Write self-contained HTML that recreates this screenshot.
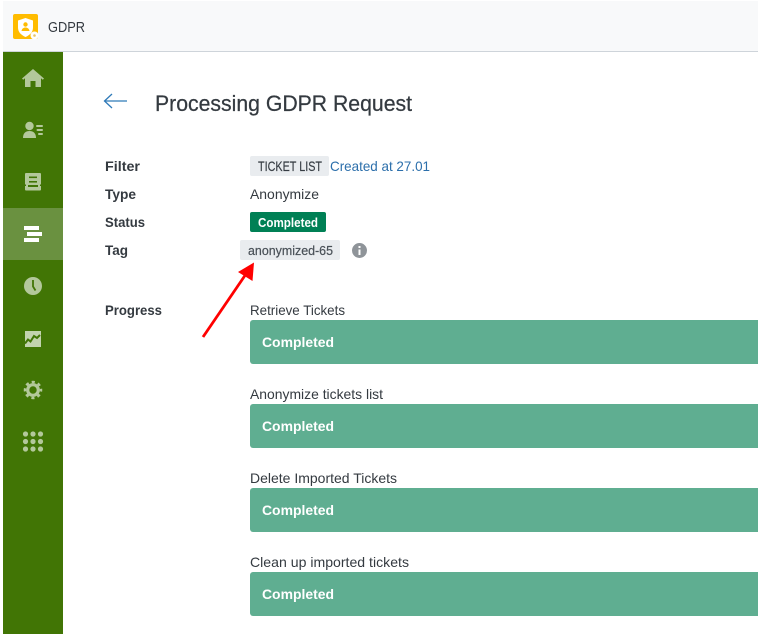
<!DOCTYPE html>
<html><head><meta charset="utf-8"><style>
html,body{margin:0;padding:0;background:#fff}
svg{display:block}
text{font-family:"Liberation Sans",sans-serif;fill:#343a40;font-size:14px}
.b{font-weight:700}
</style></head><body>
<svg width="758" height="634" viewBox="0 0 758 634" xmlns="http://www.w3.org/2000/svg">
<rect width="758" height="634" fill="#fff"/>
<rect x="3" y="1" width="755" height="50" fill="#f8f9fa"/>
<rect x="3" y="51" width="755" height="1" fill="#ced4da"/>
<rect x="13" y="14" width="25" height="25" rx="2" fill="#ffbc00"/>
<path d="M25.500 18l7.500 2.500v7c0 4.500-3 7.500-7.500 9.500-4.500-2-7.500-5-7.500-9.500v-7z" fill="#fff"/>
<circle cx="25.500" cy="24.500" r="2.200" fill="#ffbc00"/><path d="M21.500 31c.5-2.500 2-3.500 4-3.500s3.500 1 4 3.500z" fill="#ffbc00"/>
<circle cx="34.500" cy="35.500" r="4" fill="#fff"/><circle cx="34.500" cy="35.500" r="1.300" fill="#e8c468"/>
<text x="48" y="32" style="font-size:15px" textLength="37" lengthAdjust="spacingAndGlyphs">GDPR</text>

<rect x="3" y="52" width="60" height="582" fill="#417505"/>
<rect x="3" y="208" width="60" height="52" fill="#6a9140"/>
<g fill="#b3c89b">
<path d="M33 69l11 9.500-1.200 1.200-1.800-1.500V87h-5.500v-6h-5v6H25v-8.800l-1.800 1.500L22 78.500z"/>
<circle cx="29.500" cy="126" r="4.200"/><path d="M23 138c0-5 2.800-7 6.500-7s6.500 2 6.500 7z"/>
<rect x="36" y="125" width="7" height="2" rx="1"/><rect x="36.500" y="129" width="6.500" height="2" rx="1"/><rect x="38" y="133" width="5" height="2" rx="1"/>
<rect x="25" y="173" width="16" height="17.500" rx="1"/>
<circle cx="33" cy="286" r="9"/>
<rect x="25" y="331" width="16" height="16" fill="#c2d3ae"/>
<circle cx="25.500" cy="434" r="2.600"/><circle cx="33" cy="434" r="2.600"/><circle cx="40.500" cy="434" r="2.600"/>
<circle cx="25.500" cy="441.500" r="2.600"/><circle cx="33" cy="441.500" r="2.600"/><circle cx="40.500" cy="441.500" r="2.600"/>
<circle cx="25.500" cy="449" r="2.600"/><circle cx="33" cy="449" r="2.600"/><circle cx="40.500" cy="449" r="2.600"/>
</g>
<circle cx="33" cy="390" r="5.300" fill="none" stroke="#b3c89b" stroke-width="3.200"/>
<circle cx="33" cy="390" r="8" fill="none" stroke="#b3c89b" stroke-width="2.500" stroke-dasharray="3.142 3.142" stroke-dashoffset="1.571"/>
<g fill="#417505"><rect x="29" y="176.500" width="8" height="1.600"/><rect x="29" y="181" width="8" height="1.600"/><rect x="28" y="185" width="10" height="2"/><rect x="25" y="184.500" width="1" height="1.500"/><rect x="40" y="184.500" width="1" height="1.500"/></g>
<path d="M33 280v6.500l2.500 4" fill="none" stroke="#417505" stroke-width="1.800"/>
<path d="M25 343.500l3-4 2.500 2 3.500-5.500 3 2 3-3" fill="none" stroke="#417505" stroke-width="2"/>
<g fill="#fff"><rect x="24" y="226" width="15" height="4"/><rect x="27" y="232" width="15" height="4"/><rect x="24" y="238" width="15" height="4"/></g>

<path d="M127 101H104.500M112 94l-7.500 7 7.500 7" fill="none" stroke="#2f7ab8" stroke-width="1.300"/>
<text x="155" y="111" style="font-size:22px;stroke:#343a40;stroke-width:.25" textLength="257" lengthAdjust="spacingAndGlyphs">Processing GDPR Request</text>

<text class="b" x="105" y="171" textLength="35" lengthAdjust="spacingAndGlyphs">Filter</text>
<text class="b" x="105" y="199" textLength="31" lengthAdjust="spacingAndGlyphs">Type</text>
<text class="b" x="105" y="227" textLength="40" lengthAdjust="spacingAndGlyphs">Status</text>
<text class="b" x="105" y="255" textLength="23" lengthAdjust="spacingAndGlyphs">Tag</text>
<text class="b" x="105" y="315" textLength="57" lengthAdjust="spacingAndGlyphs">Progress</text>

<rect x="250" y="156" width="79" height="20" rx="2" fill="#e9ecef"/>
<text x="258" y="171" style="font-size:14px;stroke:#495057;stroke-width:.2" textLength="64" lengthAdjust="spacingAndGlyphs">TICKET LIST</text>
<text x="330" y="171" style="fill:#2c6fab" textLength="100" lengthAdjust="spacingAndGlyphs">Created at 27.01</text>
<text x="250" y="199" textLength="69" lengthAdjust="spacingAndGlyphs">Anonymize</text>
<rect x="250" y="212" width="76" height="20" rx="2" fill="#008055"/>
<text class="b" x="258" y="227" style="fill:#fff;font-size:13px" textLength="60" lengthAdjust="spacingAndGlyphs">Completed</text>
<rect x="240" y="240" width="100" height="20" rx="2" fill="#e9ecef"/>
<text x="248" y="255" style="font-size:13px;fill:#495057;stroke:#495057;stroke-width:.2" textLength="85" lengthAdjust="spacingAndGlyphs">anonymized-65</text>
<circle cx="359.500" cy="250.500" r="7.500" fill="#8f9499"/>
<rect x="358.500" y="249.500" width="2" height="5.500" fill="#fff"/><rect x="358.500" y="246" width="2" height="2" fill="#fff"/>

<path d="M203 337L246 274" stroke="#f00" stroke-width="2.800" fill="none"/>
<path d="M254 262.500L238 272L252.500 281z" fill="#f00"/>

<text x="250" y="315" textLength="95" lengthAdjust="spacingAndGlyphs">Retrieve Tickets</text>
<rect x="250" y="320" width="520" height="44" rx="3" fill="#5fae91"/>
<text class="b" x="262" y="347" style="fill:#fff" textLength="72" lengthAdjust="spacingAndGlyphs">Completed</text>

<text x="250" y="399" textLength="133" lengthAdjust="spacingAndGlyphs">Anonymize tickets list</text>
<rect x="250" y="404" width="520" height="44" rx="3" fill="#5fae91"/>
<text class="b" x="262" y="431" style="fill:#fff" textLength="72" lengthAdjust="spacingAndGlyphs">Completed</text>

<text x="250" y="483" textLength="147" lengthAdjust="spacingAndGlyphs">Delete Imported Tickets</text>
<rect x="250" y="488" width="520" height="44" rx="3" fill="#5fae91"/>
<text class="b" x="262" y="515" style="fill:#fff" textLength="72" lengthAdjust="spacingAndGlyphs">Completed</text>

<text x="250" y="567" textLength="159" lengthAdjust="spacingAndGlyphs">Clean up imported tickets</text>
<rect x="250" y="572" width="520" height="44" rx="3" fill="#5fae91"/>
<text class="b" x="262" y="599" style="fill:#fff" textLength="72" lengthAdjust="spacingAndGlyphs">Completed</text>
</svg>
</body></html>
